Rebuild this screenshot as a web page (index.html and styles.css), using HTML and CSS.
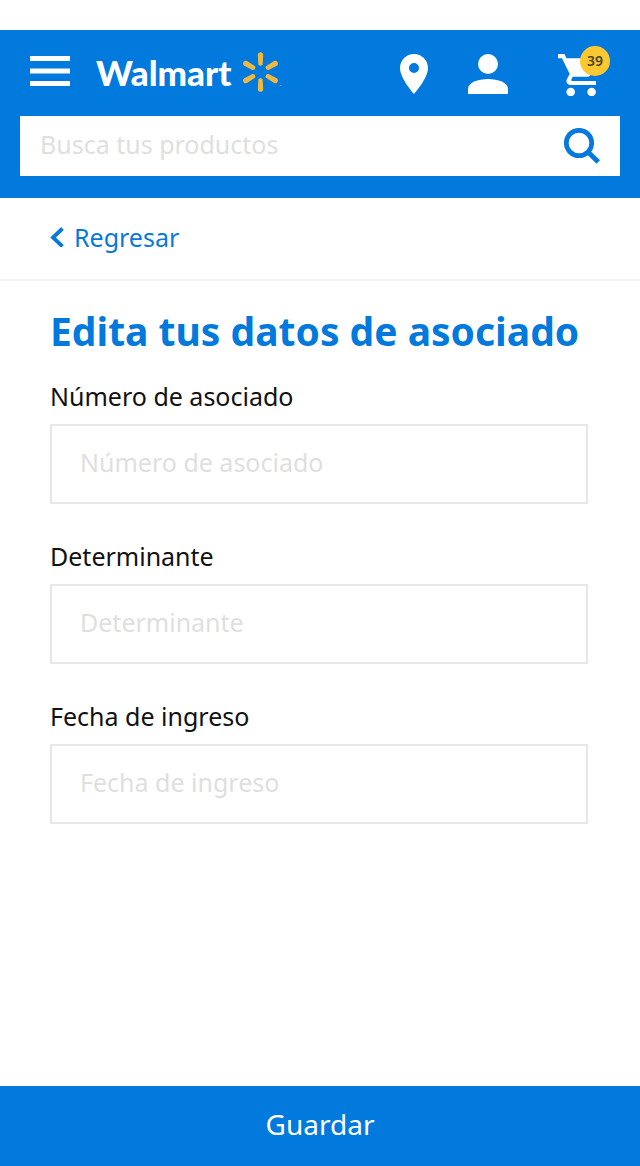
FILE: index.html
```html
<!DOCTYPE html>
<html lang="es">
<head>
<meta charset="utf-8">
<meta name="viewport" content="width=device-width, initial-scale=1">
<title>Edita tus datos de asociado</title>
<link rel="stylesheet" href="styles.css">
</head>
<body>
<div class="page">
  <header class="header">
    <div class="topbar">
      <button class="icon-button menu" type="button" aria-label="Menú">
        <svg width="40" height="30" viewBox="0 0 40 30" fill="#fff"><path d="M0 0h40v5H0zM0 12.500h40v5H0zM0 25h40v5H0z"/></svg>
      </button>
      <a class="brand" href="#">
        <span class="brand-name">Walmart</span>
        <svg width="40" height="40" viewBox="0 0 40 40" fill="#f0b840" aria-hidden="true">
          <defs><path id="ray" d="M15.800 2.800C15.800-.6 21.200-.6 21.200 2.800L20.700 12C20.600 14.200 16.400 14.200 16.300 12Z"/></defs>
          <use href="#ray"/>
          <use href="#ray" transform="rotate(60 18.500 20)"/>
          <use href="#ray" transform="rotate(120 18.500 20)"/>
          <use href="#ray" transform="rotate(180 18.500 20)"/>
          <use href="#ray" transform="rotate(240 18.500 20)"/>
          <use href="#ray" transform="rotate(300 18.500 20)"/>
          <path d="M37.500 33h2v1h-2z" opacity=".5"/>
        </svg>
      </a>
      <nav class="actions" aria-label="Cuenta">
        <a href="#" aria-label="Tiendas"><svg width="28" height="40" viewBox="5 2 14 20" fill="#fff"><path d="M12 2C8.130 2 5 5.130 5 9c0 5.250 7 13 7 13s7-7.750 7-13c0-3.870-3.130-7-7-7zm0 9.500a2.500 2.500 0 1 1 0-5 2.500 2.500 0 0 1 0 5z"/></svg></a>
        <a href="#" aria-label="Mi cuenta"><svg width="40" height="40" viewBox="0 0 40 40" fill="#fff"><circle cx="20" cy="10" r="10"/><path d="M0 40v-5c0-6.500 10-10 20-10s20 3.500 20 10v5z"/></svg></a>
        <a class="cart" href="#" aria-label="Carrito, 39 productos"><svg width="42" height="42" viewBox="0 0 42 42" fill="#fff"><path d="M0 0h6.500l2 4.200H38c1.400 0 2.200 1.500 1.500 2.700L33 20.500c-.7 1.200-1.900 2.200-3.400 2.200H14.700l-1.300 2.500c-.4 1 0 1.800 1 1.800H38V31H12.500c-3.200 0-5-3.200-3.500-6l2.700-5.100L4 4.200H0z"/><circle cx="12.700" cy="38" r="4.300"/><circle cx="33.600" cy="38" r="4.300"/></svg><span class="badge">39</span></a>
      </nav>
    </div>
    <form class="search" role="search">
      <input class="search-input" type="search" placeholder="Busca tus productos" aria-label="Busca tus productos">
      <button class="icon-button" type="submit" aria-label="Buscar">
        <svg width="36" height="36" viewBox="0 0 36 36" fill="none" stroke="#0779dc"><circle cx="15" cy="15" r="12.700" stroke-width="4.700"/><path d="M24 24l10.300 10" stroke-width="5"/></svg>
      </button>
    </form>
  </header>
  <nav class="back-bar" aria-label="Navegación">
    <a class="back" href="#"><svg width="14" height="20" viewBox="0 0 14 20" fill="none" stroke="#0779dc" stroke-width="3.800"><path d="M12.500 1.500L3 10.500l9.500 9"/></svg>Regresar</a>
  </nav>
  <main class="content">
    <h1 class="title">Edita tus datos de asociado</h1>
    <form class="form" id="associate">
      <div class="field"><label for="number">Número de asociado</label><input id="number" type="text" placeholder="Número de asociado"></div>
      <div class="field"><label for="store">Determinante</label><input id="store" type="text" placeholder="Determinante"></div>
      <div class="field"><label for="date">Fecha de ingreso</label><input id="date" type="text" placeholder="Fecha de ingreso"></div>
    </form>
  </main>
  <button class="save" type="submit" form="associate">Guardar</button>
</div>
</body>
</html>
```
FILE: styles.css
```css
* { box-sizing: border-box; }
body { margin: 0; background: #fff; color: #111; font-family: "Noto Sans", "Open Sans", sans-serif; font-size: 25px; line-height: 32px; }
a { color: inherit; text-decoration: none; }
svg { display: block; flex: none; }
input, button { font: inherit; border: 0; border-radius: 0; appearance: none; }
input { min-width: 0; background: #fff; color: #111; outline: 0; }
input::placeholder { color: #dfdfdf; opacity: 1; }
.page { min-height: 100vh; display: flex; flex-direction: column; padding-top: 30px; }
.header { background: #0279dd; padding: 22px 20px; }
.topbar { display: flex; align-items: flex-start; height: 64px; padding: 0 20px 0 10px; }
.icon-button { padding: 0; background: none; cursor: pointer; }
.menu { margin-top: 4px; }
.brand { display: flex; align-items: center; gap: 11px; margin-left: 26px; color: #fff; }
.brand-name { font-family: Lato, "Noto Sans", sans-serif; font-size: 35px; font-weight: 900; line-height: 40px; }
.actions { display: flex; align-items: flex-start; margin: 2px 0 0 auto; gap: 40px; }
.cart { position: relative; margin-left: 10px; }
.badge { position: absolute; top: -8px; right: -10px; width: 30px; height: 30px; border-radius: 50%; background: #fcc82f; color: #4b4328; font-size: 14px; font-weight: 600; line-height: 30px; text-align: center; }
.search { display: flex; align-items: center; background: #fff; height: 60px; padding: 0 20px; }
.search-input { flex: 1; padding: 0 0 4px; }
.back-bar { display: flex; align-items: center; height: 83px; padding: 0 50px 4px; border-bottom: 2px solid #f3f3f3; color: #0779dc; }
.back { display: flex; align-items: center; gap: 10px; }
.content { flex: 1; padding: 24px 52px 40px 50px; }
.title { margin: 0; color: #0279dd; font-size: 39px; font-weight: 700; line-height: 52px; white-space: nowrap; }
.form { display: grid; gap: 36px; margin-top: 23px; }
.field { display: grid; gap: 12px; }
.field input { width: 100%; height: 80px; padding: 0 28px 4px; border: 2px solid #e7e7e7; }
.save { height: 80px; padding: 0 0 4px; background: #0279dd; color: #fff; font-size: 28px; cursor: pointer; }
```
